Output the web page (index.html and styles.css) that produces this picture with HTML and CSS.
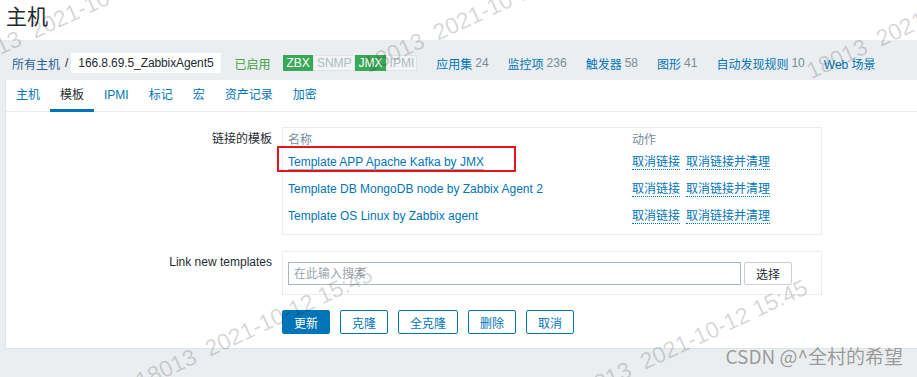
FILE: index.html
```html
<!DOCTYPE html>
<html lang="zh-CN">
<head>
<meta charset="UTF-8" />
<meta name="viewport" content="width=device-width, initial-scale=1" />
<title>主机 - 模板</title>
<link rel="stylesheet" href="styles.css">
</head>
<body>

<header class="top">
  <h1>主机</h1>
</header>

<div class="main">
  <ul class="crumbs">
    <li><a href="#" class="crumb-link">所有主机</a><span class="sep">/</span><span class="host">166.8.69.5_ZabbixAgent5</span></li>
    <li class="enabled">已启用</li>
    <li class="badges">
      <span class="badge on">ZBX</span><span class="badge">SNMP</span><span class="badge on">JMX</span><span class="badge">IPMI</span>
    </li>
    <li class="item"><a href="#">应用集</a> <span class="count">24</span></li>
    <li class="item"><a href="#">监控项</a> <span class="count">236</span></li>
    <li class="item"><a href="#">触发器</a> <span class="count">58</span></li>
    <li class="item"><a href="#">图形</a> <span class="count">41</span></li>
    <li class="item"><a href="#">自动发现规则</a> <span class="count">10</span></li>
    <li class="item"><a href="#">Web 场景</a></li>
  </ul>

  <div class="panel">
    <ul class="tabs">
      <li><a href="#">主机</a></li>
      <li class="active"><a href="#">模板</a></li>
      <li><a href="#">IPMI</a></li>
      <li><a href="#">标记</a></li>
      <li><a href="#">宏</a></li>
      <li><a href="#">资产记录</a></li>
      <li><a href="#">加密</a></li>
    </ul>

    <form class="form">
      <div class="row">
        <label class="label">链接的模板</label>
        <div class="box linked">
          <div class="head">名称</div>
          <div class="head">动作</div>

          <div class="cell marked"><a href="#" class="tpl hover">Template APP Apache Kafka by JMX</a></div>
          <div class="cell"><a href="#" class="act">取消链接</a><a href="#" class="act">取消链接并清理</a></div>

          <div class="cell"><a href="#" class="tpl">Template DB MongoDB node by Zabbix Agent 2</a></div>
          <div class="cell"><a href="#" class="act">取消链接</a><a href="#" class="act">取消链接并清理</a></div>

          <div class="cell"><a href="#" class="tpl">Template OS Linux by Zabbix agent</a></div>
          <div class="cell"><a href="#" class="act">取消链接</a><a href="#" class="act">取消链接并清理</a></div>
        </div>
      </div>

      <div class="row second">
        <label class="label">Link new templates</label>
        <div class="box multi">
          <input type="text" class="search" placeholder="在此输入搜索" />
          <button type="button" class="btn-grey">选择</button>
        </div>
      </div>

      <div class="actions">
        <button type="button" class="btn main-btn">更新</button>
        <button type="button" class="btn">克隆</button>
        <button type="button" class="btn">全克隆</button>
        <button type="button" class="btn">删除</button>
        <button type="button" class="btn">取消</button>
      </div>
    </form>
  </div>
</div>

<!-- watermark overlay -->
<div class="wm-layer">
  <div class="wm w1">18013&nbsp;&nbsp;2021-10-12 15:45</div>
  <div class="wm w2">18013&nbsp;&nbsp;2021-10-12 15:45</div>
  <div class="wm w3">18013&nbsp;&nbsp;2021-10-12 15:45</div>
  <div class="wm w4">18013&nbsp;&nbsp;2021-10-12 15:45</div>
  <div class="wm w5">18013&nbsp;&nbsp;2021-10-12 15:45</div>
  <div class="csdn">CSDN @^全村的希望</div>
</div>

</body>
</html>
```

FILE: styles.css
```css
html, body {
  overflow: hidden;
}
body {
  margin: 0;
  background: #ebeef0;
  color: #1f2c33;
  font-family: "Liberation Sans", Arial, "Noto Sans CJK SC", sans-serif;
  font-size: 12px;
  position: relative;
  height: 377px;
}
a {
  color: #0275b8;
  text-decoration: none;
}
ul {
  list-style: none;
  margin: 0;
  padding: 0;
}

/* header */
.top {
  background: #fff;
  height: 40px;
  box-sizing: border-box;
  padding: 6px 0 0 6px;
}
.top h1 {
  margin: 0;
  font-size: 21px;
  line-height: 21px;
  font-weight: normal;
  color: #1f2c33;
}

/* breadcrumbs */
.crumbs {
  display: flex;
  align-items: center;
  height: 40px;
  box-sizing: border-box;
  padding: 13px 0 7px 12px;
  white-space: nowrap;
}
.crumbs li {
  display: flex;
  align-items: center;
  height: 20px;
}
.crumb-link {
  color: #2a5f95;
}
.sep {
  color: #1f2c33;
  margin: 0 3px 0 5px;
}
.host {
  background: #fff;
  height: 20px;
  line-height: 20px;
  padding: 0 7px;
  letter-spacing: -0.1px;
}
.enabled {
  color: #429e47;
  margin-left: 14px;
}
.badges {
  margin-left: 12px;
}
.badge {
  display: inline-block;
  height: 14px;
  line-height: 14px;
  padding: 0 2px 0 3px;
  border: 1px solid #dfe4e7;
  background: #f2f4f5;
  color: #acbbc2;
}
.badge.on {
  background: #3aa85a;
  border-color: #3aa85a;
  color: #fff;
}
.item {
  margin-left: 19px;
}
.count {
  color: #768d99;
  margin-left: 3px;
}

/* panel */
.panel {
  background: #fff;
  margin-left: 5px;
  border-left: 1px solid #dfe4e7;
  border-bottom: 1px solid #dfe4e7;
  padding-bottom: 14px;
}
.tabs {
  display: flex;
  height: 31px;
  border-bottom: 1px solid #ebeef0;
}
.tabs li {
  position: relative;
  padding: 0 10px;
  line-height: 31px;
}
.tabs li.active a {
  color: #1f2c33;
}
.tabs li.active::after {
  content: "";
  position: absolute;
  left: 0;
  right: 0;
  bottom: -1px;
  height: 3px;
  background: #0275b8;
}

/* form */
.form {
  padding-top: 15px;
}
.row {
  display: flex;
  align-items: flex-start;
}
.row.second {
  margin-top: 16px;
}
.label {
  width: 266px;
  margin-right: 10px;
  text-align: right;
  line-height: 18px;
  padding-top: 3px;
}
.row.second .label {
  padding-top: 2px;
}
.box {
  border: 1px solid #ebeef0;
  width: 528px;
  padding: 0 5px;
}
.linked {
  display: grid;
  grid-template-columns: 344px auto;
  padding-bottom: 1px;
}
.head {
  color: #768d99;
  height: 24px;
  line-height: 24px;
}
.cell {
  line-height: 18px;
  padding: 1px 0 8px;
  white-space: nowrap;
  position: relative;
}
.tpl.hover {
  border-bottom: 1px solid #7db6da;
}
.marked::after {
  content: "";
  position: absolute;
  left: -11px;
  top: -6px;
  width: 235px;
  height: 22px;
  border: 2px solid #e8141b;
}
.act {
  border-bottom: 1px dotted #0275b8;
  margin-right: 6px;
}

.multi {
  display: flex;
  align-items: center;
  padding: 10px 5px 9px;
}
.search {
  width: 453px;
  height: 23px;
  box-sizing: border-box;
  border: 1px solid #a9b7bf;
  padding: 0 5px;
  font: inherit;
  margin: 0;
}
.search::placeholder {
  color: #9aa6ad;
}
.btn-grey {
  margin-left: 3px;
  width: 48px;
  height: 23px;
  background: #fff;
  border: 1px solid #c8d0d5;
  border-radius: 2px;
  font: inherit;
  color: #1f2c33;
  padding: 0;
}

.actions {
  display: flex;
  gap: 10px;
  margin: 15px 0 0 276px;
}
.btn {
  height: 24px;
  padding: 0 11px;
  border: 1px solid #0275b8;
  border-radius: 2px;
  background: #fff;
  color: #0275b8;
  font: inherit;
}
.btn.main-btn {
  background: #0275b8;
  color: #fff;
}

/* watermark */
.wm-layer {
  position: absolute;
  left: 0;
  top: 0;
  width: 917px;
  height: 377px;
  overflow: hidden;
  pointer-events: none;
}
.wm {
  position: absolute;
  font-size: 23px;
  line-height: 23px;
  color: rgba(0, 0, 0, 0.17);
  white-space: nowrap;
  transform: rotate(-25deg);
  transform-origin: 0 100%;
}
.w1 { left: -33px; top: 52px; }
.w2 { left: 370px; top: 54px; }
.w3 { left: 813px; top: 60px; }
.w4 { left: 142px; top: 370px; }
.w5 { left: 577px; top: 383px; }
.csdn {
  position: absolute;
  right: 14px;
  top: 344px;
  font-family: "Noto Sans CJK SC", sans-serif;
  font-size: 19px;
  line-height: 24px;
  color: #999;
  text-shadow: 0 0 1px #fff;
}
```
